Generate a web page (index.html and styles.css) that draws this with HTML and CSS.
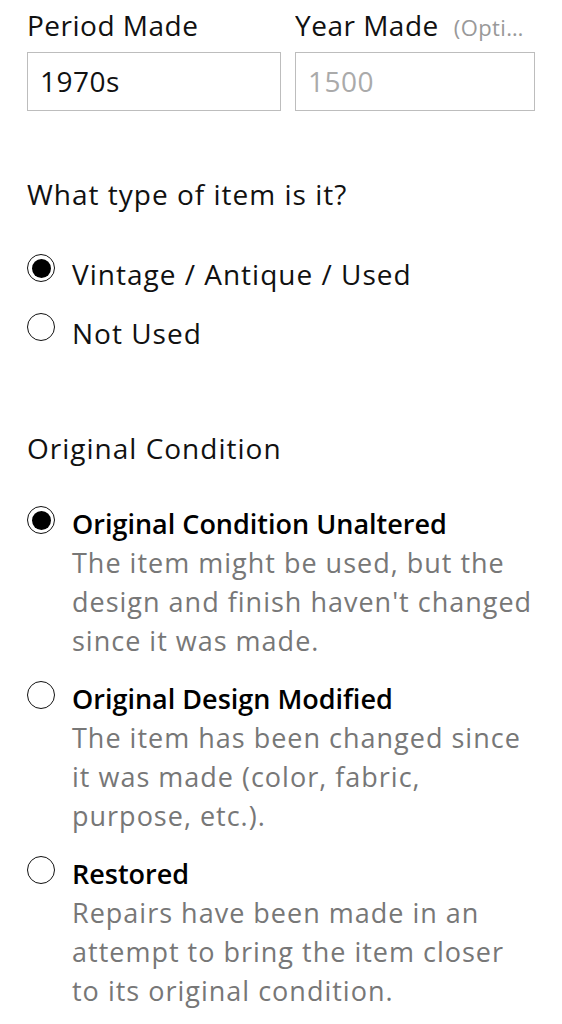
FILE: index.html
```html
<!DOCTYPE html>
<html lang="en">
<head>
<meta charset="utf-8">
<title>Item details</title>
<link rel="stylesheet" href="styles.css">
</head>
<body>
<div class="page">
  <div class="fields">
    <div class="field">
      <div class="label">Period Made</div>
      <div class="input">1970s</div>
    </div>
    <div class="field">
      <div class="label"><span class="label-main">Year Made</span><span class="optional">(Optional)</span></div>
      <div class="input placeholder">1500</div>
    </div>
  </div>

  <div class="question">What type of item is it?</div>
  <div class="simple-options">
    <div class="option simple">
      <span class="radio checked"></span>
      <span class="option-text">Vintage / Antique / Used</span>
    </div>
    <div class="option simple">
      <span class="radio"></span>
      <span class="option-text">Not Used</span>
    </div>
  </div>

  <div class="question condition">Original Condition</div>
  <div class="rich-options">
    <div class="option rich">
      <span class="radio checked"></span>
      <div class="option-body">
        <div class="option-title">Original Condition Unaltered</div>
        <div class="option-desc">The item might be used, but the design and finish haven't changed since it was made.</div>
      </div>
    </div>
    <div class="option rich">
      <span class="radio"></span>
      <div class="option-body">
        <div class="option-title">Original Design Modified</div>
        <div class="option-desc">The item has been changed since it was made (color, fabric, purpose, etc.).</div>
      </div>
    </div>
    <div class="option rich">
      <span class="radio"></span>
      <div class="option-body">
        <div class="option-title">Restored</div>
        <div class="option-desc">Repairs have been made in an attempt to bring the item closer to its original condition.</div>
      </div>
    </div>
  </div>
</div>
</body>
</html>
```

FILE: styles.css
```css
html, body {
  margin: 0;
  padding: 0;
  background: #fff;
}
body {
  font-family: "Open Sans", "Noto Sans", sans-serif;
  color: #111;
  font-size: 28px;
}
.page {
  padding: 5px 27px 0 27px;
}
.fields {
  display: grid;
  grid-template-columns: 254px 1fr;
  column-gap: 14px;
}
.field {
  min-width: 0;
}
.label {
  display: flex;
  align-items: baseline;
  height: 40px;
  line-height: 40px;
  white-space: nowrap;
  overflow: hidden;
  letter-spacing: 0.5px;
}
.label-main {
  flex: none;
}
.optional {
  margin-left: 15px;
  font-size: 22px;
  line-height: 40px;
  letter-spacing: 0.4px;
  color: #999;
  overflow: hidden;
  text-overflow: ellipsis;
  min-width: 0;
  padding-right: 2px;
}
.input {
  margin-top: 7px;
  height: 57px;
  border: 1px solid #bdbdbd;
  padding: 0 12px;
  line-height: 57px;
  color: #111;
  letter-spacing: 0.5px;
}
.input.placeholder {
  color: #aaa;
}
.question {
  margin-top: 63px;
  line-height: 40px;
  letter-spacing: 1px;
}
.question.condition {
  margin-top: 75px;
}
.simple-options {
  margin-top: 40px;
  display: flex;
  flex-direction: column;
  gap: 19px;
}
.rich-options {
  margin-top: 36px;
  display: flex;
  flex-direction: column;
  gap: 19px;
}
.option {
  display: flex;
  align-items: flex-start;
  gap: 17px;
}
.simple .option-text {
  line-height: 40px;
  letter-spacing: 1px;
}
.radio {
  flex: none;
  box-sizing: border-box;
  width: 28px;
  height: 28px;
  border: 1.6px solid #111;
  border-radius: 50%;
  display: flex;
  align-items: center;
  justify-content: center;
}
.simple .radio {
  margin-top: 0;
}
.rich .radio {
  margin-top: 2px;
}
.radio.checked::after {
  content: "";
  width: 19px;
  height: 19px;
  border-radius: 50%;
  background: #000;
}
.option-body {
  line-height: 39px;
  min-width: 0;
  flex: 1;
}
.option-title {
  font-size: 27px;
  font-weight: 600;
  color: #000;
}
.option-desc {
  font-size: 27px;
  letter-spacing: 1px;
  color: #777;
}
```
